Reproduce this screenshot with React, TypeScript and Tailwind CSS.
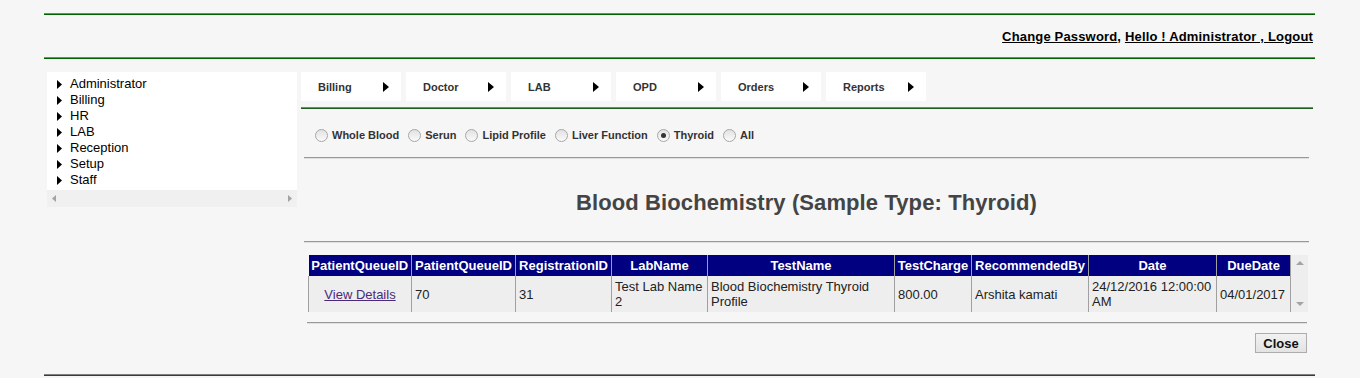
import React from 'react';

const menu = ['Administrator', 'Billing', 'HR', 'LAB', 'Reception', 'Setup', 'Staff'];
const tabs = ['Billing', 'Doctor', 'LAB', 'OPD', 'Orders', 'Reports'];
const types = ['Whole Blood', 'Serun', 'Lipid Profile', 'Liver Function', 'Thyroid', 'All'];

const cols = [
  { h: 'PatientQueueID', w: 103 },
  { h: 'PatientQueueID', w: 104 },
  { h: 'RegistrationID', w: 96 },
  { h: 'LabName', w: 96 },
  { h: 'TestName', w: 187 },
  { h: 'TestCharge', w: 77 },
  { h: 'RecommendedBy', w: 117 },
  { h: 'Date', w: 128 },
  { h: 'DueDate', w: 74 },
];

const Arrow: React.FC = () => (
  <svg width="6" height="10" viewBox="0 0 6 10" className="shrink-0">
    <path d="M0 0 L6 5 L0 10 Z" fill="#000" />
  </svg>
);

const Rule: React.FC<{ className?: string }> = ({ className = '' }) => (
  <div className={`h-[2px] border-t border-[#808080] bg-[#006400] ${className}`} />
);

const App: React.FC = () => {
  return (
    <div className="h-[378px] w-[1360px] bg-[#f6f6f6] font-['Liberation_Sans',Arial,sans-serif] text-[#222] overflow-hidden">
      <div className="ml-[44px] w-[1271px] pt-[13px]">
        <Rule />
        <div className="flex h-[42px] items-center justify-end pr-[2px] pt-[1px] text-[13px] font-bold tracking-[0.17px] text-black">
          <span className="underline">Change Password</span>
          <span>,&nbsp;</span>
          <span className="underline">Hello ! Administrator , Logout</span>
        </div>
        <Rule />

        <div className="mt-[13px] flex">
          {/* left menu */}
          <div className="ml-[3px] w-[250px] shrink-0">
            <div className="bg-white pb-[2px] pt-[4px]">
              {menu.map((m) => (
                <div key={m} className="flex h-[16px] items-center pl-[10px] text-[13px] text-black">
                  <svg width="5" height="9" viewBox="0 0 5 9" className="mr-[8px]">
                    <path d="M0 0 L5 4.5 L0 9 Z" fill="#000" />
                  </svg>
                  {m}
                </div>
              ))}
            </div>
            <div className="flex h-[17px] items-center justify-between bg-[#f0f0f0] px-[5px]">
              <svg width="4" height="7" viewBox="0 0 4 7"><path d="M4 0 L0 3.5 L4 7 Z" fill="#a3a3a3" /></svg>
              <svg width="4" height="7" viewBox="0 0 4 7"><path d="M0 0 L4 3.5 L0 7 Z" fill="#a3a3a3" /></svg>
            </div>
          </div>

          {/* main */}
          <div className="ml-[4px] w-[1012px]">
            <div className="flex gap-[5px]">
              {tabs.map((t) => (
                <div key={t} className="flex h-[29px] w-[100px] items-center justify-between bg-white pl-[17px] pr-[12px] pt-[1px] text-[11px] font-bold text-[#333]">
                  <span>{t}</span>
                  <Arrow />
                </div>
              ))}
            </div>
            <div className="mt-[6px] h-[2px] border-t border-[#808080] bg-[#1f5c1f]" />

            <div className="mx-[3px] w-[1005px]">
              <div className="flex h-[48px] items-center pl-[11px] pt-[5px] text-[11px] font-bold text-[#333]">
                {types.map((t) => (
                  <label key={t} className="mr-[9px] flex items-center">
                    <span className="mr-[4px] flex h-[13px] w-[13px] items-center justify-center rounded-full border border-[#a8a8a8] bg-gradient-to-b from-[#e2e2e2] to-[#fafafa]">
                      {t === 'Thyroid' && <span className="h-[5px] w-[5px] rounded-full bg-[#333]" />}
                    </span>
                    {t}
                  </label>
                ))}
              </div>
              <div className="h-[2px] border-t border-[#999] bg-[#e0e0e0]" />

              <div className="flex h-[82px] items-center justify-center pt-[4px] text-[22px] font-bold tracking-[0.1px] text-[#444]">
                Blood Biochemistry (Sample Type: Thyroid)
              </div>
              <div className="h-[2px] border-t border-[#999] bg-[#e0e0e0]" />

              <div className="ml-[4px] mt-[12px] flex">
                <table className="border-collapse text-[13px]" style={{ tableLayout: 'fixed', width: 982 }}>
                  <colgroup>
                    {cols.map((c, i) => (
                      <col key={i} style={{ width: c.w }} />
                    ))}
                  </colgroup>
                  <thead>
                    <tr className="h-[21px] bg-[#000080] text-white">
                      {cols.map((c, i) => (
                        <th key={i} className="border-x border-[#a0a0a0] px-[2px] py-0 text-center font-bold leading-[15px] first:border-l-0 whitespace-nowrap">
                          {c.h}
                        </th>
                      ))}
                    </tr>
                  </thead>
                  <tbody>
                    <tr className="h-[36px] bg-[#eeeeee] align-middle leading-[15px] text-[#222]">
                      <td className="border-r border-l border-[#a0a0a0] px-[3px] text-center">
                        <span className="text-[#4b2a7a] underline">View Details</span>
                      </td>
                      <td className="border-r border-[#a0a0a0] px-[3px]">70</td>
                      <td className="border-r border-[#a0a0a0] px-[3px]">31</td>
                      <td className="border-r border-[#a0a0a0] px-[3px]">Test Lab Name 2</td>
                      <td className="border-r border-[#a0a0a0] px-[3px]">Blood Biochemistry Thyroid Profile</td>
                      <td className="border-r border-[#a0a0a0] px-[3px]">800.00</td>
                      <td className="border-r border-[#a0a0a0] px-[3px]">Arshita kamati</td>
                      <td className="border-r border-[#a0a0a0] px-[3px]">24/12/2016 12:00:00 AM</td>
                      <td className="border-r border-[#a0a0a0] px-[3px]">04/01/2017</td>
                    </tr>
                  </tbody>
                </table>
                <div className="flex h-[57px] w-[17px] flex-col items-center justify-between bg-[#eeeeee] py-[6px]">
                  <svg width="8" height="4" viewBox="0 0 8 4"><path d="M0 4 L4 0 L8 4 Z" fill="#a3a3a3" /></svg>
                  <svg width="8" height="4" viewBox="0 0 8 4"><path d="M0 0 L4 4 L8 0 Z" fill="#a3a3a3" /></svg>
                </div>
              </div>

              <div className="ml-[3px] mt-[10px] h-[2px] w-[1000px] border-t border-[#999] bg-[#e0e0e0]" />
              <div className="flex w-[1003px] justify-end pt-[9px]">
                <button className="h-[20px] w-[52px] border border-[#adadad] bg-gradient-to-b from-[#f2f2f2] to-[#e3e3e3] text-[13px] font-bold text-[#111]">
                  Close
                </button>
              </div>
            </div>
          </div>
        </div>
      </div>
      <div className="ml-[44px] mt-[21px] w-[1271px]">
        <Rule />
      </div>
    </div>
  );
};

export default App;
